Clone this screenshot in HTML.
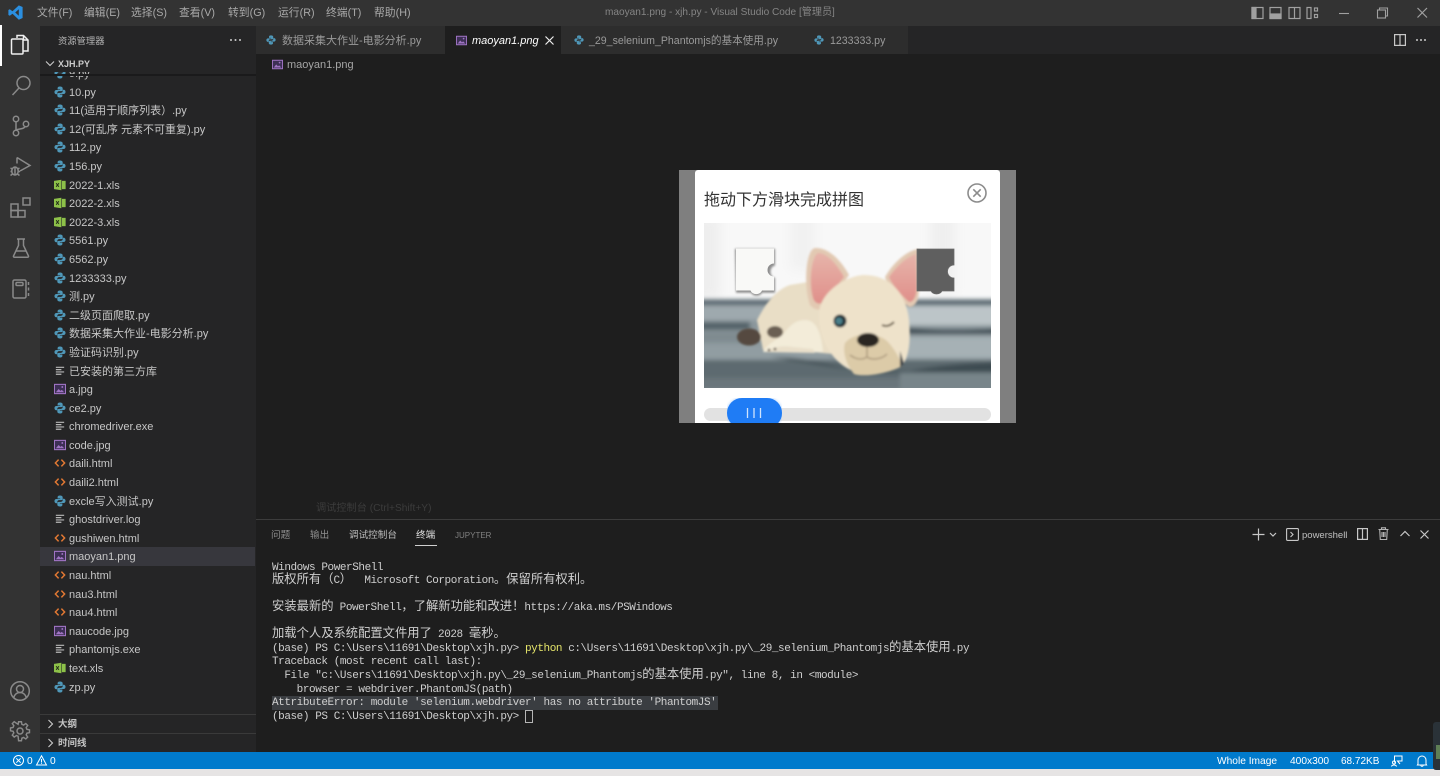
<!DOCTYPE html>
<html lang="zh">
<head>
<meta charset="utf-8">
<title>maoyan1.png - xjh.py - Visual Studio Code</title>
<style>
html,body{margin:0;padding:0;background:#1e1e1e;overflow:hidden}
#app{position:relative;width:1440px;height:776px;overflow:hidden;background:#1e1e1e;font-family:"Liberation Sans","Noto Sans CJK SC",sans-serif;color:#ccc;filter:blur(.35px)}
.a{position:absolute;white-space:nowrap}
.m{top:5px;font-size:10.8px;line-height:16px;color:#a9a9a9}
#list{position:absolute;left:40px;top:72px;width:215px;height:642px;overflow:hidden;font-size:11px}
#in{margin-top:-8px}
.r{height:18.6px;line-height:20.4px;position:relative;padding-left:29px;color:#c6c6c6;white-space:nowrap}
.r svg{position:absolute;left:13.5px;top:3px;width:12px;height:12px}
.r.s{background:#37373d}
.t{top:33px;font-size:11px;line-height:17px;color:#9a9a9a}
.tab{position:absolute;top:26px;height:28px;background:#2d2d2d}
.pt{top:528px;font-size:9.6px;line-height:16px;color:#8f8f8f}
#term{position:absolute;left:272px;top:561.6px;font-family:"Liberation Mono","Noto Sans CJK SC",monospace;font-size:11px;letter-spacing:-.43px;color:#cfcfcf}
#term div{height:13.55px;line-height:13.55px;white-space:pre}
#term b{font-weight:400;font-size:12.3px;letter-spacing:0;line-height:0;font-family:"Noto Sans CJK SC","Liberation Sans",sans-serif}
.st{top:753px;font-size:10.2px;line-height:17px;color:#fff}
svg{display:block;overflow:visible}
.ic{position:absolute;fill:none;stroke:#8a8a8a;stroke-width:1.5}
</style>
</head>
<body>
<div id="app">
<svg width="0" height="0" style="position:absolute">
<defs>
<symbol id="py" viewBox="0 0 13 13"><path fill="#4f97b8" d="M6.500.5C4.600.5 3.900 1.300 3.900 2.400V3.800H6.700V4.400H2.600C1.300 4.400.5 5.300.5 6.700S1.300 9 2.500 9H3.600V7.400C3.600 6.300 4.500 5.600 5.500 5.600H8C8.900 5.600 9.400 5 9.400 4.100V2.400C9.400 1.200 8.300.5 6.500.5Z"/><path fill="#4f97b8" transform="rotate(180 6.500 6.500)" d="M6.500.5C4.600.5 3.900 1.300 3.900 2.400V3.800H6.700V4.400H2.600C1.300 4.400.5 5.300.5 6.700S1.300 9 2.500 9H3.600V7.400C3.600 6.300 4.500 5.600 5.500 5.600H8C8.900 5.600 9.400 5 9.400 4.100V2.400C9.400 1.200 8.300.5 6.500.5Z"/></symbol>
<symbol id="xl" viewBox="0 0 13 13"><path fill="#8dc149" d="M0 2 8 .8v11.400L0 11z"/><rect x="8.600" y="2" width="4" height="9" fill="#8dc149"/><path stroke="#26321a" stroke-width="1.100" fill="none" d="m2.300 4.500 3 4m0-4-3 4"/></symbol>
<symbol id="im" viewBox="0 0 13 13"><rect x=".5" y="1.500" width="12" height="10" fill="#3d2f55" stroke="#a074c4" stroke-width="1.200"/><path fill="#a074c4" d="m2 10 3-3.500 2 2 1.500-1 2.500 2.500z"/><circle cx="9" cy="4.300" r="1" fill="#a074c4"/></symbol>
<symbol id="ht" viewBox="0 0 13 13"><path fill="none" stroke="#e37933" stroke-width="1.600" d="M5 2.800 1.500 6.500 5 10.200M8 2.800l3.500 3.700L8 10.200"/></symbol>
<symbol id="tx" viewBox="0 0 13 13"><path fill="none" stroke="#b8b8b8" stroke-width="1.300" d="M2 2.500h9M2 5h6M2 7.500h9M2 10h6"/></symbol>
</defs>
</svg>

<!-- title bar -->
<div class="a" style="left:0;top:0;width:1440px;height:26px;background:#333"></div>
<svg class="a" style="left:8px;top:5px" width="15" height="15" viewBox="0 0 15 15"><path fill="#2b8fe0" d="M10.800.4 14.600 2v11l-3.800 1.700L4.500 8.700 1.800 10.800.4 10V5l1.400-.8 2.700 2.100zM10.800 4.200 7.200 7.500l3.600 3.300z"/></svg>
<div class="a m" style="left:37px">文件(F)</div>
<div class="a m" style="left:84px">编辑(E)</div>
<div class="a m" style="left:131px">选择(S)</div>
<div class="a m" style="left:179px">查看(V)</div>
<div class="a m" style="left:228px">转到(G)</div>
<div class="a m" style="left:278px">运行(R)</div>
<div class="a m" style="left:326px">终端(T)</div>
<div class="a m" style="left:374px">帮助(H)</div>
<div class="a" style="left:605px;top:5px;font-size:10.1px;line-height:16px;color:#858585">maoyan1.png - xjh.py - Visual Studio Code [管理员]</div>
<svg class="a" style="left:1251px;top:6px;fill:none;stroke:#a0a0a0;stroke-width:1.200" width="68" height="14"><rect x="1" y="1.500" width="11" height="11"/><rect x="1" y="1.500" width="4" height="11" fill="#a0a0a0"/><rect x="19" y="1.500" width="11" height="11"/><rect x="19" y="8" width="11" height="4.500" fill="#a0a0a0"/><rect x="38" y="1.500" width="11" height="11"/><path d="M43.500 1.500v11"/><rect x="56" y="1.500" width="4" height="11"/><rect x="63.500" y="2" width="3" height="3"/><rect x="63.500" y="8.500" width="3" height="3"/></svg>
<svg class="a" style="left:1338px;top:6px;fill:none;stroke:#a0a0a0;stroke-width:1.100" width="95" height="14"><path d="M1 7.500h10"/><rect x="39.500" y="4" width="8" height="8"/><path d="M41.500 4V2h8v8h-2"/><path stroke-width="1.200" d="m79.500 2 9.500 9.500m0-9.500-9.500 9.500"/></svg>

<!-- activity bar -->
<div class="a" style="left:0;top:26px;width:40px;height:726px;background:#333"></div>
<div class="a" style="left:0;top:25px;width:2px;height:41px;background:#fff"></div>
<svg class="a" style="left:10px;top:34px;fill:none;stroke:#f0f0f0;stroke-width:1.500" width="20" height="22" viewBox="0 0 20 22"><path d="M7 4V1.500h6.500L18 6v11h-5"/><path d="M13.500 1.500V6H18"/><rect x="1.500" y="5" width="11.500" height="15" rx="1"/></svg>
<svg class="ic" style="left:11px;top:75px" width="20" height="22"><circle cx="12.500" cy="8" r="6.500"/><path d="M8 13 1.500 20"/></svg>
<svg class="ic" style="left:12px;top:115px" width="18" height="22"><circle cx="4" cy="4" r="2.700"/><circle cx="4" cy="18" r="2.700"/><circle cx="14" cy="9" r="2.700"/><path d="M4 7v8M13 11.500c-1 3-6 2-9 3.500"/></svg>
<svg class="ic" style="left:10px;top:156px" width="22" height="22"><path d="M7 1.500 20 9.500 10 15M7 1.500v6"/><ellipse cx="5" cy="15" rx="3.200" ry="4"/><path d="M.5 12l2 1M.5 15.500H2M.5 19.500l2-1.500M9.500 12l-2 1M8 15.500h2M9.500 19.500l-2-1.500M5 11v8"/></svg>
<svg class="ic" style="left:10px;top:197px" width="22" height="22"><rect x="1" y="7" width="7" height="6.500"/><rect x="1" y="13.500" width="7" height="6.500"/><rect x="8" y="13.500" width="7" height="6.500"/><rect x="13" y="1" width="7" height="7"/></svg>
<svg class="ic" style="left:12px;top:238px" width="18" height="21"><path d="M5 1h8M6.500 1v6.500L1.500 18a1 1 0 0 0 1 1.300h13a1 1 0 0 0 1-1.300L11.500 7.500V1M4 13h10"/></svg>
<svg class="ic" style="left:12px;top:279px" width="18" height="20"><rect x="1" y="1" width="13" height="18" rx="1.500"/><rect x="4" y="3.500" width="7" height="3" rx="1"/><path d="M16.500 3v3M16.500 8.500v3M16.500 14v3"/></svg>
<svg class="ic" style="left:10px;top:681px" width="20" height="20"><circle cx="10" cy="10" r="9.300"/><circle cx="10" cy="8" r="3.500"/><path d="M3.800 16.500c1-3.500 3.300-5 6.200-5s5.200 1.500 6.200 5"/></svg>
<svg class="ic" style="left:10px;top:721px" width="20" height="20" viewBox="0 0 20 20"><circle cx="10" cy="10" r="3"/><path d="M8.500 1h3l.5 2.700 1.800.8 2.300-1.600 2 2-1.600 2.300.8 1.800 2.700.5v3l-2.700.5-.8 1.800 1.600 2.300-2 2-2.300-1.600-1.800.8-.5 2.700h-3L8 16.300l-1.800-.8-2.300 1.600-2-2 1.600-2.300-.8-1.800L0 10.500v-3l2.700-.5.8-1.800-1.600-2.300 2-2 2.300 1.600L8 3.700z" transform="translate(.500 -.200) scale(.95)"/></svg>

<!-- sidebar -->
<div class="a" style="left:40px;top:26px;width:216px;height:726px;background:#252526"></div>
<div class="a" style="left:58px;top:33px;font-size:9.300px;line-height:16px;color:#b5b5b5">资源管理器</div>
<svg class="a" style="left:229px;top:38px" width="14" height="4"><circle cx="2" cy="2" r="1" fill="#ccc"/><circle cx="6.500" cy="2" r="1" fill="#ccc"/><circle cx="11" cy="2" r="1" fill="#ccc"/></svg>
<svg class="a" style="left:45px;top:60px;fill:none;stroke:#ccc;stroke-width:1.100" width="10" height="8"><path d="m1 1.500 4 4 4-4"/></svg>
<div class="a" style="left:58px;top:57px;font-size:9px;line-height:15px;font-weight:700;color:#ccc">XJH.PY</div>
<div class="a" style="left:40px;top:74px;width:216px;height:2px;background:#1a1a1b;z-index:3"></div>
<div id="list"><div id="in">
<div class="r"><svg><use href="#py"/></svg>9.py</div>
<div class="r"><svg><use href="#py"/></svg>10.py</div>
<div class="r"><svg><use href="#py"/></svg>11(适用于顺序列表）.py</div>
<div class="r"><svg><use href="#py"/></svg>12(可乱序 元素不可重复).py</div>
<div class="r"><svg><use href="#py"/></svg>112.py</div>
<div class="r"><svg><use href="#py"/></svg>156.py</div>
<div class="r"><svg><use href="#xl"/></svg>2022-1.xls</div>
<div class="r"><svg><use href="#xl"/></svg>2022-2.xls</div>
<div class="r"><svg><use href="#xl"/></svg>2022-3.xls</div>
<div class="r"><svg><use href="#py"/></svg>5561.py</div>
<div class="r"><svg><use href="#py"/></svg>6562.py</div>
<div class="r"><svg><use href="#py"/></svg>1233333.py</div>
<div class="r"><svg><use href="#py"/></svg>测.py</div>
<div class="r"><svg><use href="#py"/></svg>二级页面爬取.py</div>
<div class="r"><svg><use href="#py"/></svg>数据采集大作业-电影分析.py</div>
<div class="r"><svg><use href="#py"/></svg>验证码识别.py</div>
<div class="r"><svg><use href="#tx"/></svg>已安装的第三方库</div>
<div class="r"><svg><use href="#im"/></svg>a.jpg</div>
<div class="r"><svg><use href="#py"/></svg>ce2.py</div>
<div class="r"><svg><use href="#tx"/></svg>chromedriver.exe</div>
<div class="r"><svg><use href="#im"/></svg>code.jpg</div>
<div class="r"><svg><use href="#ht"/></svg>daili.html</div>
<div class="r"><svg><use href="#ht"/></svg>daili2.html</div>
<div class="r"><svg><use href="#py"/></svg>excle写入测试.py</div>
<div class="r"><svg><use href="#tx"/></svg>ghostdriver.log</div>
<div class="r"><svg><use href="#ht"/></svg>gushiwen.html</div>
<div class="r s"><svg><use href="#im"/></svg>maoyan1.png</div>
<div class="r"><svg><use href="#ht"/></svg>nau.html</div>
<div class="r"><svg><use href="#ht"/></svg>nau3.html</div>
<div class="r"><svg><use href="#ht"/></svg>nau4.html</div>
<div class="r"><svg><use href="#im"/></svg>naucode.jpg</div>
<div class="r"><svg><use href="#tx"/></svg>phantomjs.exe</div>
<div class="r"><svg><use href="#xl"/></svg>text.xls</div>
<div class="r"><svg><use href="#py"/></svg>zp.py</div>
</div></div>
<div class="a" style="left:40px;top:714px;width:216px;height:1px;background:#3a3a3a"></div>
<svg class="a" style="left:47px;top:719px;fill:none;stroke:#ccc;stroke-width:1.100" width="8" height="10"><path d="m1.500 1 4 4-4 4"/></svg>
<div class="a" style="left:58px;top:717px;font-size:9.500px;line-height:16px;font-weight:700;color:#c4c4c4">大纲</div>
<div class="a" style="left:40px;top:733px;width:216px;height:1px;background:#3a3a3a"></div>
<svg class="a" style="left:47px;top:738px;fill:none;stroke:#ccc;stroke-width:1.100" width="8" height="10"><path d="m1.500 1 4 4-4 4"/></svg>
<div class="a" style="left:58px;top:736px;font-size:9.500px;line-height:16px;font-weight:700;color:#c4c4c4">时间线</div>

<!-- tab bar -->
<div class="a" style="left:256px;top:26px;width:1184px;height:28px;background:#252526"></div>
<div class="tab" style="left:256px;width:189px"></div>
<div class="tab" style="left:445px;width:116px;background:#1e1e1e"></div>
<div class="tab" style="left:561px;width:239px"></div>
<div class="tab" style="left:800px;width:108px"></div>
<svg class="a" style="left:266px;top:35px" width="10" height="10"><use href="#py" width="10" height="10"/></svg>
<div class="a t" style="left:282px">数据采集大作业-电影分析.py</div>
<svg class="a" style="left:456px;top:35px" width="11" height="11"><use href="#im" width="11" height="11"/></svg>
<div class="a t" style="left:472px;color:#fff;font-style:italic">maoyan1.png</div>
<svg class="a" style="left:545px;top:36px;fill:none;stroke:#eee;stroke-width:1.200" width="9" height="9"><path d="m.5.5 8 8m0-8-8 8"/></svg>
<svg class="a" style="left:574px;top:35px" width="10" height="10"><use href="#py" width="10" height="10"/></svg>
<div class="a t" style="left:589px;font-size:10.600px">_29_selenium_Phantomjs的基本使用.py</div>
<svg class="a" style="left:814px;top:35px" width="10" height="10"><use href="#py" width="10" height="10"/></svg>
<div class="a t" style="left:830px;font-size:10.600px">1233333.py</div>
<svg class="a" style="left:1394px;top:34px;fill:none;stroke:#c8c8c8;stroke-width:1.200" width="12" height="12"><rect x=".6" y=".6" width="10.800" height="10.800"/><path d="M6 .6v10.800"/></svg>
<svg class="a" style="left:1415px;top:38px" width="12" height="4"><circle cx="2" cy="2" r="1" fill="#c8c8c8"/><circle cx="6" cy="2" r="1" fill="#c8c8c8"/><circle cx="10" cy="2" r="1" fill="#c8c8c8"/></svg>

<!-- breadcrumb -->
<svg class="a" style="left:272px;top:59px" width="11" height="11"><use href="#im" width="11" height="11"/></svg>
<div class="a" style="left:287px;top:57px;font-size:11px;line-height:17px;color:#a5a5a5">maoyan1.png</div>

<!-- captcha image -->
<div class="a" style="left:679px;top:170px;width:337px;height:253px;background:#7f7f7f"></div>
<div class="a" style="left:695px;top:170px;width:305px;height:253px;background:#fff;border-radius:3px 3px 0 0"></div>
<div class="a" style="left:704px;top:190px;font-size:16px;line-height:22px;color:#333">拖动下方滑块完成拼图</div>
<svg class="a" style="left:967px;top:183px;fill:none;stroke:#8c8c8c;stroke-width:1.600" width="20" height="20"><circle cx="10" cy="10" r="9"/><path d="m6.300 6.300 7.400 7.400m0-7.400-7.400 7.400"/></svg>
<svg class="a" style="left:704px;top:223px;overflow:hidden" width="287" height="165" viewBox="704 223 287 165">
<defs>
<linearGradient id="ear" x1="0" y1="0" x2="0" y2="1"><stop offset="0" stop-color="#e6b4aa"/><stop offset="1" stop-color="#e08f8a"/></linearGradient>
<filter id="b1" x="-10%" y="-10%" width="120%" height="120%"><feGaussianBlur stdDeviation="1"/></filter>
<filter id="b2" x="-10%" y="-20%" width="120%" height="140%"><feGaussianBlur stdDeviation="2"/></filter>
<filter id="b4" x="-30%" y="-30%" width="160%" height="160%"><feGaussianBlur stdDeviation="6"/></filter>
</defs>
<rect x="704" y="223" width="287" height="80" fill="#f8f8f8"/>
<g filter="url(#b4)"><rect x="690" y="215" width="30" height="85" fill="#eeeeee"/><rect x="790" y="210" width="25" height="60" fill="#f1f1f1"/><rect x="930" y="210" width="25" height="85" fill="#efefef"/></g>
<g filter="url(#b2)">
<rect x="680" y="299" width="340" height="100" fill="#8b979c"/>
<rect x="680" y="300" width="340" height="5" fill="#586670"/>
<rect x="680" y="306" width="120" height="14" fill="#9ea9ae"/>
<rect x="900" y="306" width="120" height="19" fill="#bcc5c8"/>
<rect x="680" y="322" width="70" height="8" fill="#55636b"/>
<path d="M900 327c30 3 60 4 120 0v7H900z" fill="#3f4d55"/>
<rect x="680" y="332" width="70" height="10" fill="#7f8b90"/>
<rect x="680" y="345" width="150" height="13" fill="#919da2"/>
<rect x="900" y="337" width="120" height="21" fill="#a6b1b5"/>
<rect x="680" y="360" width="340" height="30" fill="#5d6a70"/>
<path d="M770 357c30 0 55 6 80 12l60 2c30-6 70-9 110-10v11H900c-40 2-80-8-130-15z" fill="#3e4b51"/>
<rect x="900" y="373" width="120" height="18" fill="#78858a"/>
<rect x="680" y="378" width="220" height="12" fill="#6a767b"/>
</g>
<g filter="url(#b1)">
<path d="M757 320c8-15 18-30 33-35l24-4 30 18v56l-32-3-49-2z" fill="#e9dec6"/>
<path d="M763 352c4-9 16-12 22-20 6-8 12-12 20-12 10 0 16 10 18 32z" fill="#f3ecd9"/>
<path d="M765 352c8-5 18-7 28-5l20 2 2 4z" fill="#e9dfca"/>
<circle cx="769" cy="350" r="1.300" fill="#4b4338"/><circle cx="775" cy="349" r="1.300" fill="#4b4338"/>
<ellipse cx="749" cy="337" rx="12" ry="8.500" fill="#54493f"/>
<ellipse cx="775" cy="332" rx="8" ry="6" fill="#6b5f52"/>
<path d="M810 305c-7-20-4-56 5-57 14-1 27 14 34 27l-22 31c-5 5-12 5-17-1z" fill="#e2c9b2"/>
<path d="M813 298c-5-18-1-42 5-45 10 0 20 13 26 24l-20 25c-4 3-9 2-11-4z" fill="url(#ear)"/>
<path d="M885 277c8-14 22-27 34-28v40c0 10-3 18-10 18-10-8-21-20-24-30z" fill="#e2c9b2"/>
<path d="M889 277c7-10 17-20 27-23l1 34c-1 8-3 14-8 14-8-7-17-17-20-25z" fill="url(#ear)"/>
<path d="M819 312c2-20 26-36 45-37 24 0 42 16 45 45 2 20 0 36-6 44-14 6-38 11-50 7-20-8-35-31-34-59z" fill="#eee2ca"/>
<path d="M845 343c8-10 30-12 42-2 8 8 14 20 15 25-10 6-36 12-48 8-7-8-12-22-9-31z" fill="#dccba8"/>
<circle cx="840" cy="321" r="6.500" fill="#25343a"/><circle cx="839" cy="321" r="3.500" fill="#4a7f8a"/>
<path d="M882 325c4 2 8 1 12-3" stroke="#6d604e" stroke-width="2" fill="none"/>
<ellipse cx="868" cy="340" rx="11" ry="7" fill="#2a2522"/>
<path d="M867 347v10M850 355c8 6 14 4 17 2 4 3 14 3 20-3" stroke="#ae9b7f" stroke-width="1.500" fill="none"/>
<path d="M900 351l4 12-4 5z" fill="#3f4548"/>
</g>
<!-- pieces -->
<path d="M735 248h40v17a4.500 6 0 0 0 0 12v15h-13a6 5 0 0 1-11 0h-15z" transform="translate(0 .800)" fill="#8d8d8d" filter="url(#b1)"/>
<path d="M736 248.500h38v15a5.500 5.500 0 0 0 0 13v14h-12a6 5 0 0 1-11.500 0H736z" fill="#f9f9f7"/>
<path d="M917 249h37v16a6 6 0 0 0 0 13v13h-12a6 5 0 0 1-11 0h-14z" fill="#5f5f5f" stroke="#6d6d6d" stroke-width=".8"/>
</svg>
<div class="a" style="left:704px;top:408px;width:287px;height:13px;border-radius:7px;background:#e2e2e2"></div>
<div class="a" style="left:727px;top:398px;width:55px;height:25px;overflow:hidden"><div style="width:55px;height:30px;border-radius:15px;background:#1f7cf5;box-shadow:0 0 3px #9cc6fb"></div></div>
<svg class="a" style="left:746px;top:408px;stroke:#cfe3fd;stroke-width:1.300" width="18" height="11"><path d="M1.500 0v10M8 0v10M14.500 0v10"/></svg>

<!-- panel -->
<div class="a" style="left:316px;top:501px;font-size:10.200px;line-height:16px;color:#3c3c3c">调试控制台 (Ctrl+Shift+Y)</div>
<div class="a" style="left:256px;top:519px;width:1184px;height:1px;background:#3c3c3c"></div>
<div class="a pt" style="left:271px">问题</div>
<div class="a pt" style="left:310px">输出</div>
<div class="a pt" style="left:349px;color:#bdbdbd">调试控制台</div>
<div class="a pt" style="left:416px;color:#e2e2e2">终端</div>
<div class="a" style="left:415px;top:545px;width:22px;height:1px;background:#d0d0d0"></div>
<div class="a pt" style="left:455px;font-size:8px;color:#808080">JUPYTER</div>
<svg class="a" style="left:1252px;top:528px;fill:none;stroke:#c8c8c8;stroke-width:1.200" width="28" height="13"><path d="M6.500 .5v12M.5 6.500h12M18 5l3 3 3-3"/></svg>
<svg class="a" style="left:1286px;top:528px;fill:none;stroke:#c8c8c8;stroke-width:1.100" width="13" height="13"><rect x=".6" y=".6" width="11.800" height="11.800" rx="1"/><path d="m4.500 4 2.500 2.500L4.500 9"/></svg>
<div class="a" style="left:1302px;top:527.500px;font-size:9.500px;line-height:16px;color:#c0c0c0">powershell</div>
<svg class="a" style="left:1357px;top:528px;fill:none;stroke:#c8c8c8;stroke-width:1.200" width="11" height="12"><rect x=".6" y=".6" width="9.800" height="10.800"/><path d="M5.500 .6v10.800"/></svg>
<svg class="a" style="left:1378px;top:527px;fill:none;stroke:#b5b5b5;stroke-width:1.100" width="11" height="13"><path d="M.5 2.500h10M3.500 2.500V.8h4v1.700M1.700 2.500l.6 10h6.400l.6-10M4 5v5M5.500 5v5M7 5v5"/></svg>
<svg class="a" style="left:1400px;top:530px;fill:none;stroke:#c8c8c8;stroke-width:1.200" width="10" height="7"><path d="m.5 6 4.500-4.500L9.500 6"/></svg>
<svg class="a" style="left:1420px;top:530px;fill:none;stroke:#c8c8c8;stroke-width:1.200" width="9" height="9"><path d="m.5.5 8 8m0-8-8 8"/></svg>

<!-- terminal -->
<div class="a" style="left:272px;top:696px;width:446px;height:13.500px;background:#3a3d41"></div>
<div id="term"><div>Windows PowerShell</div><div><b>版权所有（</b>C<b>）</b>  Microsoft Corporation<b>。保留所有权利。</b></div><div> </div><div><b>安装最新的</b> PowerShell<b>，了解新功能和改进！</b>https://aka.ms/PSWindows</div><div> </div><div><b>加载个人及系统配置文件用了</b> 2028 <b>毫秒。</b></div><div>(base) PS C:\Users\11691\Desktop\xjh.py&gt; <span style="color:#e5e56a">python</span> c:\Users\11691\Desktop\xjh.py\_29_selenium_Phantomjs<b>的基本使用</b>.py</div><div>Traceback (most recent call last):</div><div>  File "c:\Users\11691\Desktop\xjh.py\_29_selenium_Phantomjs<b>的基本使用</b>.py", line 8, in &lt;module&gt;</div><div>    browser = webdriver.PhantomJS(path)</div><div>AttributeError: module 'selenium.webdriver' has no attribute 'PhantomJS'</div><div>(base) PS C:\Users\11691\Desktop\xjh.py&gt;</div></div>
<div class="a" style="left:525px;top:710px;width:6px;height:11px;border:1px solid #b5b5b5"></div>

<!-- status bar -->
<div class="a" style="left:0;top:752px;width:1440px;height:17px;background:#007acc"></div>
<div class="a" style="left:0;top:769px;width:1440px;height:7px;background:#e6e4e4"></div>
<svg class="a" style="left:13px;top:755px;fill:none;stroke:#fff;stroke-width:1" width="11" height="11"><circle cx="5.500" cy="5.500" r="5"/><path d="m3.300 3.300 4.400 4.400m0-4.400-4.400 4.400"/></svg>
<div class="a st" style="left:27px">0</div>
<svg class="a" style="left:36px;top:755px;fill:none;stroke:#fff;stroke-width:1" width="11" height="11"><path d="M5.500.8 10.500 10H.5zM5.500 4v3.500M5.500 8.300v.7"/></svg>
<div class="a st" style="left:50px">0</div>
<div class="a st" style="left:1217px">Whole Image</div>
<div class="a st" style="left:1290px">400x300</div>
<div class="a st" style="left:1341px;font-size:10px">68.72KB</div>
<svg class="a" style="left:1391px;top:755px;fill:none;stroke:#fff;stroke-width:1" width="12" height="12"><path d="M3.500 7.500V1h7.500v5H6.500L9 9"/><circle cx="3" cy="7.500" r="1.500"/><path d="M.5 11.500c.5-2 4.500-2 5 0"/></svg>
<svg class="a" style="left:1417px;top:755px;fill:none;stroke:#fff;stroke-width:1" width="10" height="12"><path d="M1 9V5a4 4 0 0 1 8 0v4l.6 1H.4zM3.700 10.500a1.400 1.400 0 0 0 2.600 0"/></svg>
<div class="a" style="left:1433px;top:722px;width:7px;height:48px;background:#2a3238;border-radius:3px 0 0 3px"></div>
<div class="a" style="left:1436px;top:745px;width:4px;height:14px;background:#5f7f55"></div>
</div>
</body>
</html>
